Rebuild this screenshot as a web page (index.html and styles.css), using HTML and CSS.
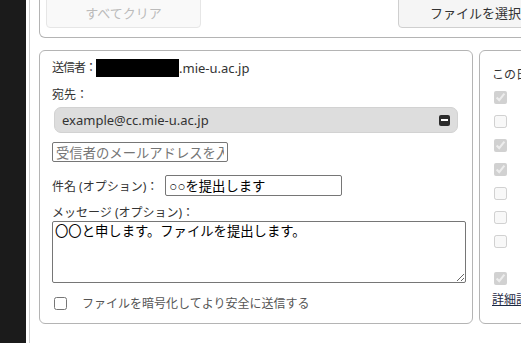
FILE: index.html
```html
<!DOCTYPE html>
<html lang="ja">
<head>
    <meta charset="UTF-8">
    <meta name="viewport" content="width=device-width, initial-scale=1.0">
    <title>ファイル送信</title>
    <link rel="stylesheet" href="styles.css">
</head>
<body>
<div class="sidebar"></div>
<div class="content">
    <div class="toolbar">
        <button class="btn" disabled>すべてクリア</button>
        <button class="btn btn-file">ファイルを選択</button>
    </div>
    <div class="panels">
        <div class="panel panel-mail">
            <div class="sender"><span class="lbl">送信者：</span><span class="masked"></span>.mie-u.ac.jp</div>
            <div class="to-label">宛先：</div>
            <div class="recipient">
                <span>example@cc.mie-u.ac.jp</span>
                <span class="remove"></span>
            </div>
            <input type="text" class="to-input" placeholder="受信者のメールアドレスを入力">
            <div class="subject-row">
                <label>件名 (オプション)：</label>
                <input type="text" class="subject" value="○○を提出します">
            </div>
            <div class="msg-label">メッセージ (オプション)：</div>
            <textarea class="message">〇〇と申します。ファイルを提出します。</textarea>
            <label class="encrypt"><input type="checkbox"><span>ファイルを暗号化してより安全に送信する</span></label>
        </div>
        <div class="panel panel-options">
            <div class="opt-title">この日時以降にダウンロード</div>
            <ul class="opt-list">
                <li><input type="checkbox" checked disabled></li>
                <li><input type="checkbox" disabled></li>
                <li><input type="checkbox" checked disabled></li>
                <li><input type="checkbox" checked disabled></li>
                <li><input type="checkbox" disabled></li>
                <li><input type="checkbox" disabled></li>
                <li><input type="checkbox" disabled></li>
                <li class="opt-gap"><input type="checkbox" checked disabled></li>
            </ul>
            <a href="#" class="details">詳細設定</a>
        </div>
    </div>
</div>
</body>
</html>
```

FILE: styles.css
```css
html, body {
    margin: 0;
    height: 100%;
    overflow: hidden;
}
body {
    display: flex;
    font-family: "Noto Sans", "Noto Sans CJK JP", sans-serif;
    font-size: 12px;
    color: #333;
    background: #fff;
}
.sidebar {
    width: 26px;
    flex: none;
    background: #1b1b1b;
}
.content {
    margin-left: 3px;
    border-left: 1px solid #cfcfcf;
    padding-left: 9px;
    width: 720px;
    flex: none;
}
.toolbar {
    margin-top: -20px;
    border: 1px solid #b4b4b4;
    border-top: none;
    border-radius: 0 0 6px 6px;
    padding: 0 0 9px 6px;
    display: flex;
    gap: 197px;
}
.btn {
    width: 155px;
    height: 48px;
    padding-top: 18px;
    background: #f5f5f5;
    border: 1px solid #cfcfcf;
    border-radius: 4px;
    font-family: "Noto Sans CJK JP", sans-serif;
    font-size: 13px;
    color: #333;
}
.btn:disabled {
    background: #f9f9f9;
    border-color: #e6e6e6;
    color: #bbb;
}
.panels {
    display: flex;
    gap: 6px;
    margin-top: 12px;
    height: 274px;
}
.panel {
    border: 1px solid #b4b4b4;
    border-radius: 6px;
    box-sizing: border-box;
}
.panel-mail {
    width: 434px;
    padding: 0 6px 0 12px;
}
.panel-options {
    flex: 1;
    padding: 0 12px;
}
.sender {
    margin-top: 7px;
    line-height: 20px;
    display: flex;
    align-items: center;
    font-size: 13px;
}
.sender .lbl {
    font-size: 12px;
    letter-spacing: -1px;
}
.recipient span {
    font-size: 13px;
}
.masked {
    display: inline-block;
    width: 83px;
    height: 18px;
    background: #000;
}
.to-label {
    margin-top: 7px;
    line-height: 20px;
}
.recipient {
    margin: 2px 0 0 2px;
    width: 404px;
    height: 26px;
    box-sizing: border-box;
    background: #ddd;
    border: 1px solid #d2d2d2;
    border-radius: 7px;
    padding: 0 7px 0 7px;
    display: flex;
    align-items: center;
    justify-content: space-between;
}
.remove {
    width: 11px;
    height: 11px;
    border-radius: 2px;
    background: #2b2b2b;
    display: flex;
    align-items: center;
    justify-content: center;
}
.remove::after {
    content: "";
    width: 7px;
    height: 2px;
    background: #fff;
}
input[type="text"], textarea {
    font-family: "Noto Sans CJK JP", sans-serif;
    font-size: 13.33px;
    color: #000;
    border: 1px solid #767676;
    border-radius: 2px;
    box-sizing: border-box;
    padding: 0 3px;
}
.to-input {
    display: block;
    margin-top: 9px;
    width: 176px;
    height: 20px;
}
.to-input::placeholder {
    color: #757575;
}
.subject-row {
    margin-top: 13px;
    display: flex;
    align-items: center;
}
.subject-row label {
    margin-right: 7px;
}
input.subject {
    width: 177px;
    height: 21px;
    font-family: "Liberation Sans", "Noto Sans CJK JP", sans-serif;
}
.msg-label {
    margin-top: 9px;
    line-height: 16px;
}
.message {
    display: block;
    width: 414px;
    height: 62px;
    resize: both;
    line-height: 18px;
    padding: 0 2px;
}
.encrypt {
    margin-top: 10px;
    height: 20px;
    display: flex;
    align-items: center;
    gap: 15px;
    color: #555;
}
.encrypt input {
    margin: 0 0 0 2px;
    width: 13px;
    height: 13px;
}
.opt-title {
    margin-top: 14px;
    line-height: 20px;
}
.opt-list {
    list-style: none;
    margin: 0;
    padding: 0;
}
.opt-list li {
    height: 24px;
    display: flex;
    align-items: center;
}
.opt-list li.opt-gap {
    margin-top: 13px;
}
.opt-list input {
    margin: 0 0 0 2px;
    width: 13px;
    height: 13px;
}
.details {
    display: block;
    line-height: 20px;
    color: #1e2a44;
}
```
